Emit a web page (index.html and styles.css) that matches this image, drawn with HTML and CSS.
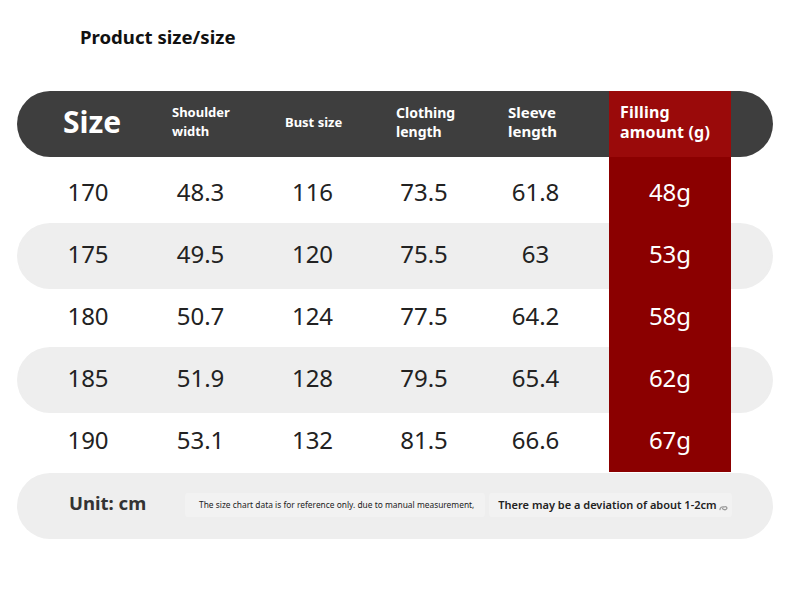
FILE: index.html
```html
<!DOCTYPE html>
<html lang="en">
<head>
<meta charset="utf-8">
<title>Product size</title>
<link rel="stylesheet" href="styles.css">
</head>
<body>
<div class="page">
  <h1 class="title">Product size/size</h1>
  <div class="chart">
    <div class="highlight"></div>
    <div class="row head">
      <div class="hcell hsize">Size</div>
      <div class="hcell h13">Shoulder<br>width</div>
      <div class="hcell h13 single">Bust size</div>
      <div class="hcell h14">Clothing<br>length</div>
      <div class="hcell h15">Sleeve<br>length</div>
      <div class="hcell h16 red">Filling<br>amount (g)</div>
    </div>
    <div class="body">
      <div class="row data"><div class="cell">170</div><div class="cell">48.3</div><div class="cell">116</div><div class="cell">73.5</div><div class="cell">61.8</div><div class="cell red">48g</div></div>
      <div class="row data stripe"><div class="cell">175</div><div class="cell">49.5</div><div class="cell">120</div><div class="cell">75.5</div><div class="cell">63</div><div class="cell red">53g</div></div>
      <div class="row data"><div class="cell">180</div><div class="cell">50.7</div><div class="cell">124</div><div class="cell">77.5</div><div class="cell">64.2</div><div class="cell red">58g</div></div>
      <div class="row data stripe"><div class="cell">185</div><div class="cell">51.9</div><div class="cell">128</div><div class="cell">79.5</div><div class="cell">65.4</div><div class="cell red">62g</div></div>
      <div class="row data"><div class="cell">190</div><div class="cell">53.1</div><div class="cell">132</div><div class="cell">81.5</div><div class="cell">66.6</div><div class="cell red">67g</div></div>
    </div>
  </div>
  <div class="footer">
    <span class="unit">Unit: cm</span>
    <span class="note small">The size chart data is for reference only. due to manual measurement,</span>
    <span class="note big">There may be a deviation of about 1-2cm<svg class="mark" width="9" height="6" viewBox="0 0 9 6"><path d="M1 4.5 C1 2.5 3 1.5 5 2 C7 1 8.5 2.5 7.5 4 C6.5 5.5 4 4.5 3.5 3.5" fill="none" stroke="#9a9a9a" stroke-width="1.3" stroke-linecap="round"/></svg></span>
  </div>
</div>
</body>
</html>
```
FILE: styles.css
```css
* { box-sizing: border-box; }
html, body { margin: 0; padding: 0; background: #ffffff; }
body { font-family: "Noto Sans", "Open Sans", "Liberation Sans", sans-serif; color: #222; }

.page { width: 790px; padding: 25px 17px 0 17px; }

.title {
  margin: 0 0 42px 63px;
  font-size: 18.6px;
  line-height: 24px;
  font-weight: 700;
  color: #111;
}

.chart { position: relative; width: 756px; }

.highlight {
  position: absolute;
  left: 592px;
  top: 0;
  width: 122px;
  height: 381px;
  background: linear-gradient(#9a0a0a 0, #9a0a0a 66px, #8b0000 66px);
  z-index: 1;
}

.row {
  display: grid;
  grid-template-columns: 112px 113px 111px 112px 111px 122px;
  column-gap: 0;
}

.row.head {
  height: 66px;
  background: #3e3e3e;
  border-radius: 33px;
  padding-left: 15px;
  padding-bottom: 5px;
  grid-template-columns: 112px 113px 111px 112px 129px 122px;
  align-items: center;
}

.hcell {
  position: relative;
  z-index: 2;
  color: #fff;
  font-weight: 700;
  padding-left: 28px;
}
.hsize { font-size: 30px; line-height: 36px; padding-left: 8px; text-align: center; margin-top: 1px; }
.h13 { font-size: 13px; line-height: 19px; }
.h14 { font-size: 14px; line-height: 19px; }
.h15 { font-size: 15px; line-height: 19px; }
.h16 { font-size: 16px; line-height: 20px; padding-left: 11px; letter-spacing: 0.2px; }
.single { padding-top: 1px; }
.hcell.red { margin-top: 0; }

.body { padding-top: 6px; }

.row.data {
  height: 62px;
  margin: 0 2px;
  padding-left: 13px;
  grid-template-columns: 112px 113px 111px 112px 111px 18px 122px;
  border-radius: 31px;
  align-items: center;
}
.row.data .cell.red { grid-column: 7; color: #fff; }

.row.stripe {
  background: #eeeeee;
  box-shadow: 0 0 0 2px #eeeeee;
}

.cell {
  position: relative;
  z-index: 2;
  text-align: center;
  font-size: 24px;
  line-height: 30px;
  color: #222;
  padding-bottom: 4px;
}

.footer {
  height: 66px;
  margin-top: 0;
  background: #eeeeee;
  border-radius: 33px;
  display: flex;
  align-items: center;
  padding-left: 52px;
  padding-bottom: 3px;
}
.unit {
  font-size: 18.5px;
  font-weight: 700;
  color: #333;
  width: 116px;
  margin-top: -5px;
}
.note {
  background: #f2f2f2;
  border-radius: 3px;
  display: flex;
  align-items: center;
  height: 24px;
  color: #222;
}
.note.small {
  font-size: 8.4px;
  padding: 0 11px 0 14px;
  margin-right: 4px;
}
.note.big {
  font-size: 11px;
  font-weight: 600;
  padding: 0 4px 0 9px;
}
.mark { margin: 6px 0 0 2px; }
```
